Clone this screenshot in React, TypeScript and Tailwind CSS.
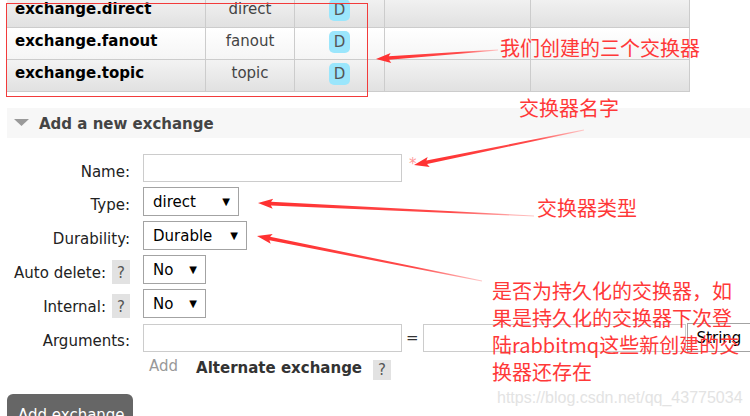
import React from 'react';

const rows = [
  { name: 'exchange.direct', type: 'direct', shade: 'gray' },
  { name: 'exchange.fanout', type: 'fanout', shade: 'white' },
  { name: 'exchange.topic', type: 'topic', shade: 'gray' },
];

// tapered annotation arrow, tail -> tip
const arrowPoints = (x1: number, y1: number, x2: number, y2: number) => {
  const dx = x2 - x1;
  const dy = y2 - y1;
  const len = Math.hypot(dx, dy);
  const ux = dx / len;
  const uy = dy / len;
  const nx = -uy;
  const ny = ux;
  const nkx = x2 - ux * 13;
  const nky = y2 - uy * 13;
  const p = (x: number, y: number) => `${x.toFixed(1)},${y.toFixed(1)}`;
  return [
    p(x1 + nx * 0.4, y1 + ny * 0.4),
    p(nkx + nx * 1.8, nky + ny * 1.8),
    p(nkx - ux * 2 + nx * 5, nky - uy * 2 + ny * 5),
    p(x2, y2),
    p(nkx - ux * 2 - nx * 5, nky - uy * 2 - ny * 5),
    p(nkx - nx * 1.8, nky - ny * 1.8),
    p(x1 - nx * 0.4, y1 - ny * 0.4),
  ].join(' ');
};

const arrows = [
  { id: 'a1', x1: 498, y1: 50, x2: 376, y2: 59 },
  { id: 'a2', x1: 584, y1: 130, x2: 414, y2: 165 },
  { id: 'a3', x1: 534, y1: 216, x2: 258, y2: 203 },
  { id: 'a4', x1: 482, y1: 281, x2: 257, y2: 236 },
];

const Select: React.FC<{ value: string; width: string }> = ({ value, width }) => (
  <div className={`${width} shrink-0 h-[29px] border border-[#a3a3a3] bg-white flex items-center justify-between pl-[9px] pr-[8px] text-black`}>
    <span>{value}</span>
    <span className="text-[10px]">▼</span>
  </div>
);

const Help: React.FC = () => (
  <span className="mt-[5px] w-[18px] h-[24px] bg-[#e2e2e2] text-[#555] flex justify-center pt-[4px]">?</span>
);

const FormRow: React.FC<{ label: string; help?: boolean; children: React.ReactNode }> = ({ label, help, children }) => (
  <div className="flex items-start">
    <div className="w-[130px] shrink-0 flex justify-end items-start gap-[6px]">
      <span className="pt-[9px] text-[#222]">{label}</span>
      {help && <Help />}
    </div>
    <div className="ml-[13px] shrink-0 flex items-center">{children}</div>
  </div>
);

export default function App() {
  return (
    <div className="relative w-[750px] h-[416px] overflow-hidden bg-white text-[15px] leading-[18px] font-['DejaVu_Sans',Verdana,sans-serif]">
      <div className="pl-[7px]">
        <div className="-mt-[4px] w-[683px] border-r border-[#cccccc]">
          {rows.map(r => (
            <div
              key={r.name}
              className={`grid grid-cols-[199px_89px_90px_146px_159px] h-[32px] border-b border-[#cccccc] ${
                r.shade === 'gray'
                  ? 'bg-linear-to-b from-[#f3f3f3] to-[#e1e1e1]'
                  : 'bg-linear-to-b from-[#ffffff] to-[#f5f5f5]'
              }`}
            >
              <div className="border-r border-[#cccccc] pl-[8px] pt-[4px] font-bold text-black">{r.name}</div>
              <div className="border-r border-[#cccccc] pt-[4px] text-center text-[#444]">{r.type}</div>
              <div className="border-r border-[#cccccc] flex justify-center pt-[3px]">
                <span className="w-[21px] h-[22px] rounded-[5px] bg-[#9be6fc] text-[#555] flex items-center justify-center">D</span>
              </div>
              <div className="border-r border-[#cccccc]" />
              <div />
            </div>
          ))}
        </div>

        <div className="mt-[16px] h-[30px] bg-[#f7f7f7] flex items-center">
          <svg width="15" height="8" viewBox="0 0 15 8" className="ml-[7px] mr-[10px]">
            <polygon points="0,0 15,0 7.5,7" fill="#9a9a9a" />
          </svg>
          <span className="pt-[2px] font-bold text-[#444]">Add a new exchange</span>
        </div>
      </div>

      <div className="mt-[16px] flex flex-col gap-[5px]">
        <FormRow label="Name:">
          <div className="w-[259px] shrink-0 h-[28px] border border-[#cccccc] bg-white" />
          <span className="ml-[7px] -mt-[8px] text-[#f99]">*</span>
        </FormRow>
        <FormRow label="Type:">
          <Select value="direct" width="w-[96px]" />
        </FormRow>
        <FormRow label="Durability:">
          <Select value="Durable" width="w-[104px]" />
        </FormRow>
        <FormRow label="Auto delete:" help>
          <Select value="No" width="w-[63px]" />
        </FormRow>
        <FormRow label="Internal:" help>
          <Select value="No" width="w-[63px]" />
        </FormRow>
        <FormRow label="Arguments:">
          <div className="w-[259px] shrink-0 h-[28px] border border-[#cccccc] bg-white" />
          <span className="mx-[4px] text-[#333]">=</span>
          <div className="w-[263px] shrink-0 h-[28px] border border-[#cccccc] bg-white" />
          <div className="ml-[1px] w-[80px] shrink-0 h-[29px] border border-[#a3a3a3] bg-white pl-[9px] flex items-center text-black">String</div>
        </FormRow>
        <div className="flex items-start pl-[149px] -mt-[3px]">
          <span className="pt-[3px] text-[#999]">Add</span>
          <span className="ml-[18px] pt-[5px] font-bold text-[#333]">Alternate exchange</span>
          <span className="ml-[11px] mt-[6px] w-[18px] h-[20px] bg-[#e2e2e2] text-[#555] flex justify-center pt-[1px]">?</span>
        </div>
      </div>

      <div className="ml-[7px] mt-[14px] w-[126px] h-[40px] rounded-[6px] bg-[#666666] text-white pl-[11px] pt-[12px]">Add exchange</div>

      {/* annotations drawn over the screenshot */}
      <div className="absolute left-[6px] top-[3px] w-[362px] h-[94px] border border-[#f23b3b]" />
      <svg className="absolute left-0 top-0 pointer-events-none" width="750" height="416">
        <defs>
          {arrows.map(a => (
            <linearGradient key={a.id} id={a.id} gradientUnits="userSpaceOnUse" x1={a.x1} y1={a.y1} x2={a.x2} y2={a.y2}>
              <stop offset="0" stopColor="#ffc8c8" />
              <stop offset="0.3" stopColor="#ff4a4a" />
              <stop offset="1" stopColor="#ff3030" />
            </linearGradient>
          ))}
        </defs>
        {arrows.map(a => (
          <polygon key={a.id} points={arrowPoints(a.x1, a.y1, a.x2, a.y2)} fill={`url(#${a.id})`} />
        ))}
      </svg>
      <div className="absolute left-[500px] top-[38px] text-[20px] leading-[20px] text-[#ff3838] font-['Noto_Sans_CJK_SC',sans-serif]">我们创建的三个交换器</div>
      <div className="absolute left-[519px] top-[98px] text-[20px] leading-[20px] text-[#ff3838] font-['Noto_Sans_CJK_SC',sans-serif]">交换器名字</div>
      <div className="absolute left-[537px] top-[198px] text-[20px] leading-[20px] text-[#ff3838] font-['Noto_Sans_CJK_SC',sans-serif]">交换器类型</div>
      <div className="absolute left-[492px] top-[277px] text-[20px] leading-[27px] text-[#ff3838] whitespace-nowrap font-['Noto_Sans_CJK_SC',sans-serif]">
        是否为持久化的交换器，如<br />
        果是持久化的交换器下次登<br />
        陆rabbitmq这些新创建的交<br />
        换器还存在
      </div>
      <div className="absolute left-[497px] top-[390px] text-[16px] leading-[16px] text-[#e3e3e3] font-['Liberation_Sans',Arial,sans-serif]">https://blog.csdn.net/qq_43775034</div>
    </div>
  );
}
